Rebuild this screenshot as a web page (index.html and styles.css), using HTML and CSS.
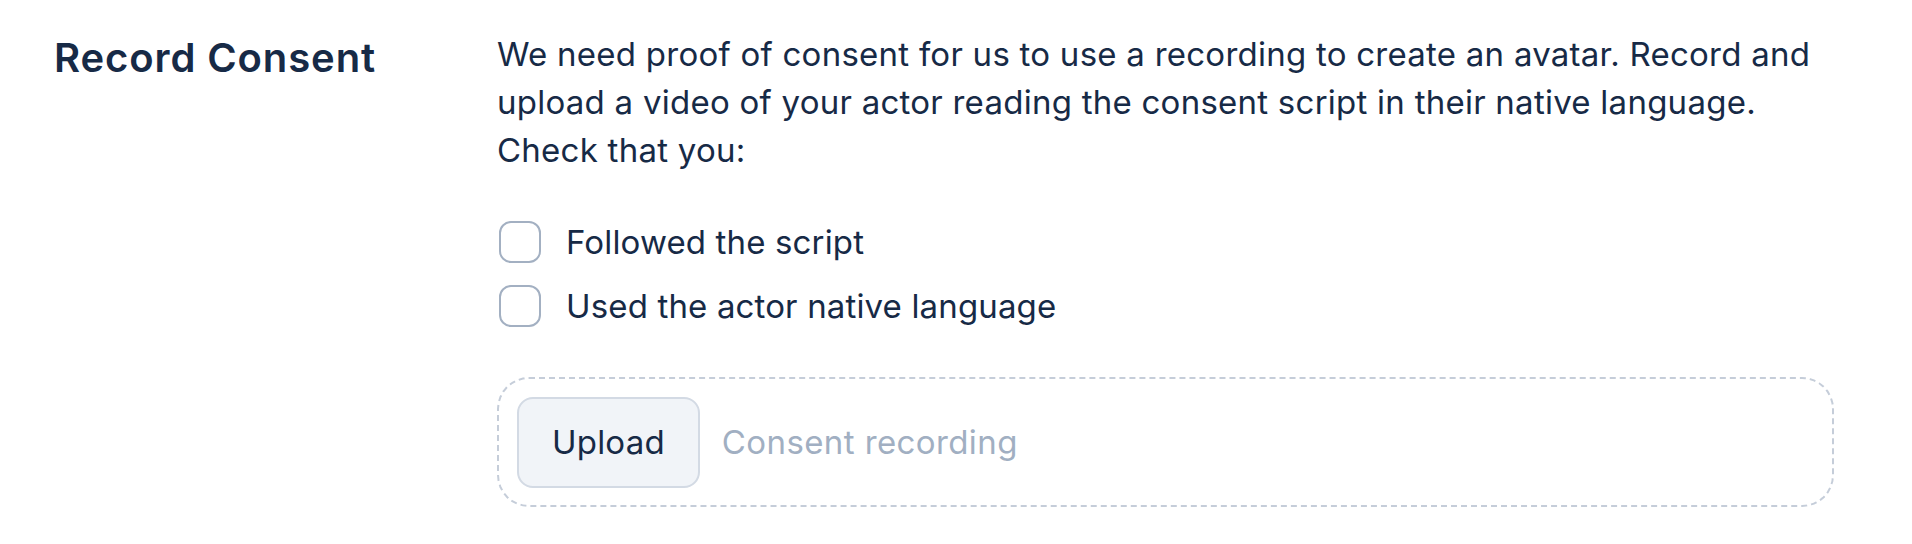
FILE: index.html
```html
<!DOCTYPE html>
<html lang="en">
<head>
<meta charset="utf-8">
<title>Record Consent</title>
<link rel="stylesheet" href="styles.css">
</head>
<body>
<section class="consent">
  <h2 class="consent-title">Record Consent</h2>
  <div class="consent-body">
    <p class="consent-text">We need proof of consent for us to use a recording to create an avatar. Record and<br>upload a video of your actor reading the consent script in their native language.<br>Check that you:</p>
    <ul class="checklist">
      <li class="check-row"><span class="check-box"></span><span class="check-label">Followed the script</span></li>
      <li class="check-row"><span class="check-box"></span><span class="check-label">Used the actor native language</span></li>
    </ul>
    <div class="dropzone">
      <button class="upload-btn" type="button">Upload</button>
      <span class="dropzone-placeholder">Consent recording</span>
    </div>
  </div>
</section>
</body>
</html>
```
FILE: styles.css
```css
* { box-sizing: border-box; }
html, body { margin: 0; padding: 0; background: #ffffff; }
body {
  font-family: Inter, "Noto Sans", "Liberation Sans", sans-serif;
  color: #172a46;
}
.consent {
  display: flex;
  padding: 30px 78px 0 54px;
}
.consent-title {
  width: 443px;
  flex: none;
  margin: 0;
  font-size: 40px;
  line-height: 56px;
  font-weight: 580;
  letter-spacing: 0.9px;
}
.consent-body {
  flex: 1;
  min-width: 0;
}
.consent-text {
  margin: 0;
  font-size: 33px;
  line-height: 48px;
  white-space: nowrap;
  letter-spacing: 0.25px;
}
.checklist {
  list-style: none;
  margin: 44px 0 0;
  padding: 0;
  display: flex;
  flex-direction: column;
  gap: 16px;
}
.check-row {
  display: flex;
  align-items: center;
  height: 48px;
  gap: 25px;
  font-size: 33px;
  letter-spacing: 0.15px;
}
.check-box {
  width: 42px;
  height: 42px;
  border: 2px solid #a3b0c2;
  border-radius: 12px;
  flex: none;
  margin-left: 2px;
}
.dropzone {
  margin-top: 47px;
  height: 130px;
  border: 2px dashed #c5cdd9;
  border-radius: 32px;
  display: flex;
  align-items: center;
  padding: 0 18px;
  gap: 22px;
}
.upload-btn {
  height: 91px;
  padding: 0 33px;
  background: #f1f4f8;
  border: 2px solid #d3dae4;
  border-radius: 16px;
  font-family: inherit;
  font-size: 33px;
  color: #172a46;
  letter-spacing: 0.2px;
}
.dropzone-placeholder {
  font-size: 33px;
  color: #a1afc2;
  letter-spacing: 0.4px;
}
```
